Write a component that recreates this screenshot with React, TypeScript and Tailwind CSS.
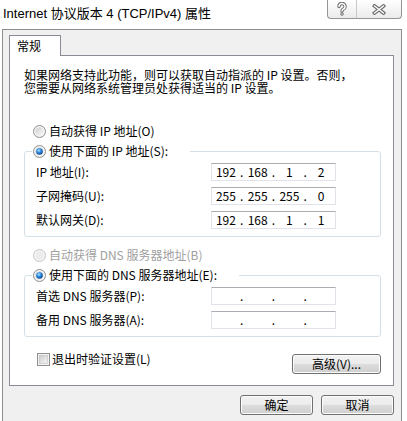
import React from "react";

function Radio({ checked = false, disabled = false }: { checked?: boolean; disabled?: boolean }) {
  return (
    <svg width="13" height="13" viewBox="0 0 13 13" className="shrink-0">
      <defs>
        <linearGradient id="rbFill" x1="0" y1="0" x2="1" y2="1">
          <stop offset="0" stopColor="#cdcdcd" />
          <stop offset="1" stopColor="#fbfbfb" />
        </linearGradient>
        <radialGradient id="rbDot" cx="0.4" cy="0.35" r="0.7">
          <stop offset="0" stopColor="#b4e6ff" />
          <stop offset="0.45" stopColor="#2d8ae0" />
          <stop offset="1" stopColor="#0b3f86" />
        </radialGradient>
      </defs>
      <circle cx="6.5" cy="6.5" r="6" fill="#f4f4f4" stroke={disabled ? "#c5c5c5" : "#8e8f8f"} />
      <circle cx="6.5" cy="6.5" r="4.2" fill={disabled ? "#ececec" : "url(#rbFill)"} />
      {checked && <circle cx="6.5" cy="6.5" r="3.3" fill="url(#rbDot)" />}
    </svg>
  );
}

function Checkbox() {
  return (
    <svg width="13" height="13" viewBox="0 0 13 13" className="shrink-0">
      <defs>
        <linearGradient id="cbFill" x1="0" y1="0" x2="1" y2="1">
          <stop offset="0" stopColor="#cbcbcb" />
          <stop offset="1" stopColor="#f7f7f7" />
        </linearGradient>
      </defs>
      <rect x="0.5" y="0.5" width="12" height="12" fill="#f4f4f4" stroke="#8e8f8f" />
      <rect x="2.5" y="2.5" width="8" height="8" fill="url(#cbFill)" stroke="#bdbdbd" strokeWidth="0.6" />
    </svg>
  );
}

function IpBox({ parts }: { parts: string[] }) {
  return (
    <div className="flex h-[18px] w-[125px] items-center border border-[#e2e3ea] border-t-[#abadb3] bg-white leading-[16px]">
      {parts.map((p, i) => (
        <React.Fragment key={i}>
          {i > 0 && <span className="w-[4px] text-center">.</span>}
          <span className="flex-1 text-center">{p}</span>
        </React.Fragment>
      ))}
    </div>
  );
}

function Btn({ children, className = "" }: { children: React.ReactNode; className?: string }) {
  return (
    <button
      className={`flex h-[20px] items-center justify-center rounded-[3px] border border-[#707070] bg-[linear-gradient(#f2f2f2,#ebebeb_50%,#dddddd_50%,#cfcfcf)] leading-none text-black shadow-[inset_0_0_0_1px_#fcfcfc] ${className}`}
    >
      {children}
    </button>
  );
}

function CaptionButtons() {
  return (
    <div className="flex h-[19px] w-[75px] overflow-hidden rounded-b-[4px] border border-t-0 border-[#959595] bg-linear-to-b from-white to-[#ebebeb]">
      <div className="flex w-[29px] items-center justify-center border-r border-[#c9c9c9]">
        <svg width="12" height="14" viewBox="0 0 12 14">
          <path d="M3 4.5 a3 3 0 1 1 4.2 2.7 Q6 7.8 6 9" fill="none" stroke="#6d6d6d" strokeWidth="3.4" strokeLinecap="round" />
          <circle cx="6" cy="12" r="1.7" fill="#6d6d6d" />
          <path d="M3 4.5 a3 3 0 1 1 4.2 2.7 Q6 7.8 6 9" fill="none" stroke="#ffffff" strokeWidth="1.4" strokeLinecap="round" />
          <circle cx="6" cy="12" r="0.7" fill="#ffffff" />
        </svg>
      </div>
      <div className="flex flex-1 items-center justify-center">
        <svg width="14" height="11" viewBox="0 0 14 11">
          <path d="M2.5 2 L11.5 9 M11.5 2 L2.5 9" stroke="#6d6d6d" strokeWidth="3.6" strokeLinecap="square" />
          <path d="M2.5 2 L11.5 9 M11.5 2 L2.5 9" stroke="#ffffff" strokeWidth="1.4" strokeLinecap="square" />
        </svg>
      </div>
    </div>
  );
}

function Row({ label, parts, first = false }: { label: string; parts: string[]; first?: boolean }) {
  return (
    <div className={`flex h-[18px] items-center ${first ? "mt-[4px]" : "mt-[6px]"}`}>
      <span className="ml-[4px] w-[175px] leading-[16px]">{label}</span>
      <IpBox parts={parts} />
    </div>
  );
}

export default function App() {
  return (
    <div className="h-[421px] w-[407px] overflow-hidden bg-white font-['Noto_Sans_CJK_SC',sans-serif] text-[12px] text-black">
      {/* Title bar */}
      <div className="flex h-[29px] items-start justify-between pl-[3px] pr-[5px]">
        <div className="pt-[5px] font-['Liberation_Sans','Noto_Sans_CJK_SC',sans-serif] text-[13px] leading-[18px]">
          Internet 协议版本 4 (TCP/IPv4) 属性
        </div>
        <CaptionButtons />
      </div>

      {/* Dialog body */}
      <div className="ml-[2px] h-[392px] w-[400px] border-x border-t border-[#8f8f8f] bg-[#f0f0f0] pl-[6px] pt-[5px]">
        <div className="relative z-10 -mb-px h-[21px] w-[52px] border border-b-0 border-[#898c95] bg-white pl-[7px] leading-[20px]">
          常规
        </div>

        <div className="h-[331px] w-[385px] border border-[#898c95] bg-white">
          <div className="ml-[14px] mt-[12px] whitespace-nowrap leading-[13px]">
            <div>如果网络支持此功能，则可以获取自动指派的 IP 设置。否则，</div>
            <div>您需要从网络系统管理员处获得适当的 IP 设置。</div>
          </div>

          <div className="ml-[23px] mt-[29px] flex h-[16px] items-center gap-[3px]">
            <Radio />
            <span>自动获得 IP 地址(O)</span>
          </div>

          <fieldset className="ml-[14px] mt-[4px] w-[357px] rounded-[3px] border border-[#d5dfe5] pb-[7px] pl-[7px]">
            <legend className="pl-[1px] pr-[22px]">
              <span className="flex h-[16px] items-center gap-[3px]">
                <Radio checked />
                <span>使用下面的 IP 地址(S):</span>
              </span>
            </legend>
            <Row first label="IP 地址(I):" parts={["192", "168", "1", "2"]} />
            <Row label="子网掩码(U):" parts={["255", "255", "255", "0"]} />
            <Row label="默认网关(D):" parts={["192", "168", "1", "1"]} />
          </fieldset>

          <div className="ml-[23px] mt-[10px] flex h-[16px] items-center gap-[3px] text-[#a0a0a0]">
            <Radio disabled />
            <span>自动获得 DNS 服务器地址(B)</span>
          </div>

          <fieldset className="ml-[14px] mt-[4px] w-[357px] rounded-[3px] border border-[#d5dfe5] pb-[7px] pl-[7px]">
            <legend className="pl-[1px] pr-[22px]">
              <span className="flex h-[16px] items-center gap-[3px]">
                <Radio checked />
                <span>使用下面的 DNS 服务器地址(E):</span>
              </span>
            </legend>
            <Row first label="首选 DNS 服务器(P):" parts={["", "", "", ""]} />
            <Row label="备用 DNS 服务器(A):" parts={["", "", "", ""]} />
          </fieldset>

          <div className="ml-[27px] mt-[14px] flex w-[344px] items-start justify-between">
            <label className="flex h-[16px] items-center gap-[2px]">
              <Checkbox />
              <span>退出时验证设置(L)</span>
            </label>
            <Btn className="mt-[3px] w-[89px]">高级(V)...</Btn>
          </div>
        </div>

        <div className="mt-[9px] flex w-[385px] justify-end gap-[8px]">
          <Btn className="w-[73px]">确定</Btn>
          <Btn className="w-[73px]">取消</Btn>
        </div>
      </div>
    </div>
  );
}
